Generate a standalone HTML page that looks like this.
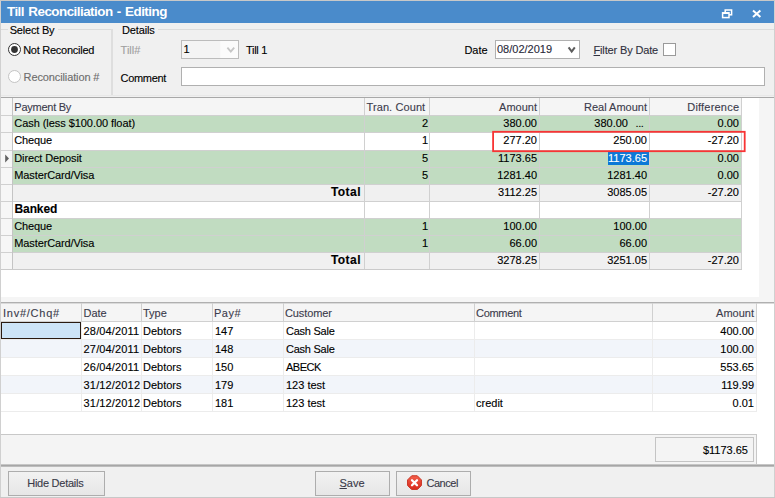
<!DOCTYPE html>
<html><head><meta charset="utf-8"><title>Till Reconciliation - Editing</title>
<style>
html,body{margin:0;padding:0;}
body{width:775px;height:498px;overflow:hidden;position:relative;background:#f0f0f0;font-family:"Liberation Sans", sans-serif;font-size:11px;}
.a{position:absolute;}
.t{white-space:nowrap;-webkit-text-stroke:0.12px currentColor;}
</style></head><body>
<div class="a " style="left:0px;top:0px;width:775px;height:498px;background:#f0f0f0;"></div>
<div class="a " style="left:0px;top:0px;width:775px;height:23px;background:#4a8bcb;"></div>
<div class="a t" style="top:4px;line-height:15px;height:15px;font-size:13.4px;color:#fff;font-weight:bold;letter-spacing:-0.52px;left:7px;-webkit-text-stroke:0;word-spacing:1.1px;">Till Reconciliation - Editing</div>
<svg class="a" style="left:720px;top:7px" width="14" height="13" viewBox="0 0 14 13">
<rect x="5.2" y="3" width="6.4" height="4.8" fill="none" stroke="#fff" stroke-width="1.5"/>
<rect x="2.6" y="5.8" width="6.4" height="4.8" fill="#4a8bcb" stroke="#fff" stroke-width="1.5"/>
<rect x="2.6" y="5.4" width="6.4" height="1.6" fill="#fff"/>
</svg>
<svg class="a" style="left:751px;top:8px" width="12" height="12" viewBox="0 0 12 12">
<path d="M2 2.5 L9.4 9.1 M9.4 2.5 L2 9.1" stroke="#fff" stroke-width="2" fill="none"/>
</svg>
<div class="a " style="left:0px;top:0px;width:1px;height:498px;background:#d0d0d0;"></div>
<div class="a " style="left:774px;top:0px;width:1px;height:498px;background:#d0d0d0;"></div>
<div class="a " style="left:0px;top:0px;width:775px;height:1px;background:#c8c8c8;"></div>
<div class="a " style="left:0px;top:497px;width:775px;height:1px;background:#c8c8c8;"></div>
<div class="a " style="left:1px;top:29px;width:7px;height:1px;background:#dcdcdc;"></div>
<div class="a " style="left:58px;top:29px;width:53px;height:1px;background:#dcdcdc;"></div>
<div class="a " style="left:111px;top:29px;width:2px;height:66px;background:#dedede;"></div>
<div class="a " style="left:1px;top:95px;width:773px;height:1px;background:#e8e8e8;"></div>
<div class="a " style="left:158px;top:29px;width:616px;height:1px;background:#dcdcdc;"></div>
<div class="a t" style="top:24px;line-height:12px;height:12px;font-size:11px;color:#000;letter-spacing:-0.2px;left:9.7px;">Select By</div>
<div class="a t" style="top:24px;line-height:12px;height:12px;font-size:11px;color:#000;letter-spacing:-0.15px;left:122px;">Details</div>
<svg class="a" style="left:7px;top:42px" width="15" height="15" viewBox="0 0 15 15">
<circle cx="7.5" cy="7.5" r="6" fill="#fff" stroke="#333" stroke-width="1"/>
<circle cx="7.5" cy="7.5" r="3.4" fill="#333"/></svg>
<svg class="a" style="left:7px;top:69px" width="15" height="15" viewBox="0 0 15 15">
<circle cx="7.5" cy="7.5" r="6" fill="#fff" stroke="#c4c4c4" stroke-width="1"/></svg>
<div class="a t" style="top:44px;line-height:12px;height:12px;font-size:11px;color:#000;letter-spacing:-0.26px;left:23.2px;">Not Reconciled</div>
<div class="a t" style="top:71px;line-height:12px;height:12px;font-size:11px;color:#6d6d6d;letter-spacing:-0.12px;left:23.6px;">Reconciliation #</div>
<div class="a t" style="top:44px;line-height:12px;height:12px;font-size:11px;color:#a0a0a0;left:120.6px;">Till#</div>
<div class="a t" style="top:72px;line-height:12px;height:12px;font-size:11px;color:#000;letter-spacing:-0.3px;left:120.5px;">Comment</div>
<div class="a " style="left:181px;top:40px;width:58px;height:19px;background:#f0f0f0;border:1px solid #bcbcbc;box-sizing:border-box;background:linear-gradient(90deg,#f4f4f4 0%,#f4f4f4 68%,#fbfbfb 69%,#fbfbfb 100%);"></div>
<div class="a t" style="top:43px;line-height:12px;height:12px;font-size:11px;color:#000;left:183.5px;">1</div>
<svg class="a" style="left:226px;top:46px" width="10" height="8" viewBox="0 0 10 8"><path d="M1.4 1.6 L4.8 5.6 L8.2 1.6" stroke="#c6c6c6" stroke-width="1.8" fill="none"/></svg>
<div class="a t" style="top:44px;line-height:12px;height:12px;font-size:11px;color:#000;letter-spacing:-0.3px;left:246px;">Till 1</div>
<div class="a " style="left:181px;top:67px;width:584px;height:19px;background:#fff;border:1px solid #b0b0b0;box-sizing:border-box;"></div>
<div class="a t" style="top:44px;line-height:12px;height:12px;font-size:11px;color:#000;left:464.4px;">Date</div>
<div class="a " style="left:495px;top:40px;width:85px;height:19px;background:#fff;border:1px solid #b0b0b0;box-sizing:border-box;"></div>
<div class="a t" style="top:43px;line-height:12px;height:12px;font-size:11px;color:#2a2a3a;left:497px;">08/02/2019</div>
<svg class="a" style="left:567px;top:46px" width="10" height="8" viewBox="0 0 10 8"><path d="M1.6 1.3 L4.7 5.6 L7.8 1.3" stroke="#5c5c5c" stroke-width="2" fill="none"/></svg>
<div class="a t" style="top:44px;line-height:12px;height:12px;font-size:11px;color:#30303e;letter-spacing:-0.15px;left:593.5px;"><u>F</u>ilter By Date</div>
<div class="a " style="left:663px;top:43px;width:13px;height:13px;background:#fff;border:1px solid #9a9a9a;box-sizing:border-box;"></div>
<div class="a " style="left:1px;top:97px;width:773px;height:1px;background:#a8a8a8;"></div>
<div class="a " style="left:1px;top:98px;width:773px;height:199px;background:#fff;"></div>
<div class="a " style="left:759px;top:98px;width:15px;height:199px;background:#f5f5f5;"></div>
<div class="a " style="left:1px;top:98px;width:11px;height:171px;background:#f6f6f6;"></div>
<div class="a " style="left:12px;top:98px;width:729px;height:17px;background:#f5f5f5;"></div>
<div class="a t" style="top:101px;line-height:12px;height:12px;font-size:11px;color:#3c3c4c;letter-spacing:-0.25px;left:14.3px;">Payment By</div>
<div class="a t" style="top:101px;line-height:12px;height:12px;font-size:11px;color:#3c3c4c;letter-spacing:0.1px;left:366.5px;">Tran. Count</div>
<div class="a t" style="top:101px;line-height:12px;height:12px;font-size:11px;color:#3c3c4c;right:238px;text-align:right;">Amount</div>
<div class="a t" style="top:101px;line-height:12px;height:12px;font-size:11px;color:#3c3c4c;right:128px;text-align:right;">Real Amount</div>
<div class="a t" style="top:101px;line-height:12px;height:12px;font-size:11px;color:#3c3c4c;letter-spacing:0.2px;right:35.8px;text-align:right;">Difference</div>
<div class="a " style="left:12px;top:115px;width:729px;height:17px;background:#c1dcc1;"></div>
<div class="a t" style="top:117px;line-height:12px;height:12px;font-size:11px;color:#000;letter-spacing:-0.06px;left:14.3px;">Cash (less $100.00 float)</div>
<div class="a t" style="top:117px;line-height:12px;height:12px;font-size:11px;color:#000;right:347px;text-align:right;">2</div>
<div class="a t" style="top:117px;line-height:12px;height:12px;font-size:11px;color:#000;right:238px;text-align:right;">380.00</div>
<div class="a t" style="top:117px;line-height:12px;height:12px;font-size:11px;color:#000;right:147px;text-align:right;">380.00</div>
<div class="a t" style="top:117px;line-height:12px;height:12px;font-size:11px;color:#000;letter-spacing:-0.4px;left:635.5px;">...</div>
<div class="a t" style="top:117px;line-height:12px;height:12px;font-size:11px;color:#000;right:36px;text-align:right;">0.00</div>
<div class="a " style="left:12px;top:132px;width:729px;height:18px;background:#fff;"></div>
<div class="a t" style="top:134px;line-height:12px;height:12px;font-size:11px;color:#000;letter-spacing:-0.12px;left:14.3px;">Cheque</div>
<div class="a t" style="top:134px;line-height:12px;height:12px;font-size:11px;color:#000;right:347px;text-align:right;">1</div>
<div class="a t" style="top:134px;line-height:12px;height:12px;font-size:11px;color:#000;right:238px;text-align:right;">277.20</div>
<div class="a t" style="top:134px;line-height:12px;height:12px;font-size:11px;color:#000;right:128px;text-align:right;">250.00</div>
<div class="a t" style="top:134px;line-height:12px;height:12px;font-size:11px;color:#000;right:36px;text-align:right;">-27.20</div>
<div class="a " style="left:12px;top:150px;width:729px;height:17px;background:#c1dcc1;"></div>
<div class="a t" style="top:152px;line-height:12px;height:12px;font-size:11px;color:#000;letter-spacing:-0.12px;left:14.3px;">Direct Deposit</div>
<div class="a t" style="top:152px;line-height:12px;height:12px;font-size:11px;color:#000;right:347px;text-align:right;">5</div>
<div class="a t" style="top:152px;line-height:12px;height:12px;font-size:11px;color:#000;right:238px;text-align:right;">1173.65</div>
<div class="a " style="left:608px;top:152px;width:41px;height:12.5px;background:#0c78d7;"></div>
<div class="a t" style="top:152px;line-height:12px;height:12px;font-size:11px;color:#fff;right:128px;text-align:right;">1173.65</div>
<div class="a t" style="top:152px;line-height:12px;height:12px;font-size:11px;color:#000;right:36px;text-align:right;">0.00</div>
<div class="a " style="left:12px;top:167px;width:729px;height:17px;background:#c1dcc1;"></div>
<div class="a t" style="top:169px;line-height:12px;height:12px;font-size:11px;color:#000;letter-spacing:-0.12px;left:14.3px;">MasterCard/Visa</div>
<div class="a t" style="top:169px;line-height:12px;height:12px;font-size:11px;color:#000;right:347px;text-align:right;">5</div>
<div class="a t" style="top:169px;line-height:12px;height:12px;font-size:11px;color:#000;right:238px;text-align:right;">1281.40</div>
<div class="a t" style="top:169px;line-height:12px;height:12px;font-size:11px;color:#000;right:128px;text-align:right;">1281.40</div>
<div class="a t" style="top:169px;line-height:12px;height:12px;font-size:11px;color:#000;right:36px;text-align:right;">0.00</div>
<div class="a " style="left:12px;top:184px;width:729px;height:17px;background:#f0f0f0;"></div>
<div class="a t" style="top:185px;line-height:14px;height:14px;font-size:12px;color:#000;font-weight:bold;letter-spacing:0.45px;right:414.05px;text-align:right;">Total</div>
<div class="a t" style="top:186px;line-height:12px;height:12px;font-size:11px;color:#000;right:238px;text-align:right;">3112.25</div>
<div class="a t" style="top:186px;line-height:12px;height:12px;font-size:11px;color:#000;right:128px;text-align:right;">3085.05</div>
<div class="a t" style="top:186px;line-height:12px;height:12px;font-size:11px;color:#000;right:36px;text-align:right;">-27.20</div>
<div class="a " style="left:12px;top:201px;width:729px;height:17px;background:#fff;"></div>
<div class="a t" style="top:202px;line-height:14px;height:14px;font-size:12px;color:#000;font-weight:bold;letter-spacing:-0.1px;left:14.5px;">Banked</div>
<div class="a " style="left:12px;top:218px;width:729px;height:17px;background:#c1dcc1;"></div>
<div class="a t" style="top:220px;line-height:12px;height:12px;font-size:11px;color:#000;letter-spacing:-0.12px;left:14.3px;">Cheque</div>
<div class="a t" style="top:220px;line-height:12px;height:12px;font-size:11px;color:#000;right:347px;text-align:right;">1</div>
<div class="a t" style="top:220px;line-height:12px;height:12px;font-size:11px;color:#000;right:238px;text-align:right;">100.00</div>
<div class="a t" style="top:220px;line-height:12px;height:12px;font-size:11px;color:#000;right:128px;text-align:right;">100.00</div>
<div class="a " style="left:12px;top:235px;width:729px;height:17px;background:#c1dcc1;"></div>
<div class="a t" style="top:237px;line-height:12px;height:12px;font-size:11px;color:#000;letter-spacing:-0.12px;left:14.3px;">MasterCard/Visa</div>
<div class="a t" style="top:237px;line-height:12px;height:12px;font-size:11px;color:#000;right:347px;text-align:right;">1</div>
<div class="a t" style="top:237px;line-height:12px;height:12px;font-size:11px;color:#000;right:238px;text-align:right;">66.00</div>
<div class="a t" style="top:237px;line-height:12px;height:12px;font-size:11px;color:#000;right:128px;text-align:right;">66.00</div>
<div class="a " style="left:12px;top:252px;width:729px;height:17px;background:#f0f0f0;"></div>
<div class="a t" style="top:253px;line-height:14px;height:14px;font-size:12px;color:#000;font-weight:bold;letter-spacing:0.45px;right:414.05px;text-align:right;">Total</div>
<div class="a t" style="top:254px;line-height:12px;height:12px;font-size:11px;color:#000;right:238px;text-align:right;">3278.25</div>
<div class="a t" style="top:254px;line-height:12px;height:12px;font-size:11px;color:#000;right:128px;text-align:right;">3251.05</div>
<div class="a t" style="top:254px;line-height:12px;height:12px;font-size:11px;color:#000;right:36px;text-align:right;">-27.20</div>
<div class="a " style="left:1px;top:115px;width:741px;height:1px;background:#d0d0d0;"></div>
<div class="a " style="left:1px;top:132px;width:741px;height:1px;background:#d0d0d0;"></div>
<div class="a " style="left:1px;top:150px;width:741px;height:1px;background:#d0d0d0;"></div>
<div class="a " style="left:1px;top:167px;width:741px;height:1px;background:#d0d0d0;"></div>
<div class="a " style="left:1px;top:184px;width:741px;height:1px;background:#d0d0d0;"></div>
<div class="a " style="left:1px;top:201px;width:741px;height:1px;background:#d0d0d0;"></div>
<div class="a " style="left:1px;top:218px;width:741px;height:1px;background:#d0d0d0;"></div>
<div class="a " style="left:1px;top:235px;width:741px;height:1px;background:#d0d0d0;"></div>
<div class="a " style="left:1px;top:252px;width:741px;height:1px;background:#d0d0d0;"></div>
<div class="a " style="left:1px;top:269px;width:741px;height:1px;background:#d0d0d0;"></div>
<div class="a " style="left:12px;top:98px;width:1px;height:172px;background:#d0d0d0;"></div>
<div class="a " style="left:364px;top:98px;width:1px;height:172px;background:#d0d0d0;"></div>
<div class="a " style="left:429px;top:98px;width:1px;height:172px;background:#d0d0d0;"></div>
<div class="a " style="left:539px;top:98px;width:1px;height:172px;background:#d0d0d0;"></div>
<div class="a " style="left:649px;top:98px;width:1px;height:172px;background:#d0d0d0;"></div>
<div class="a " style="left:741px;top:98px;width:1px;height:172px;background:#d0d0d0;"></div>
<div class="a " style="left:12px;top:98px;width:1px;height:172px;background:#c4c4c4;"></div>
<div class="a " style="left:1px;top:269px;width:741px;height:1px;background:#cacaca;"></div>
<svg class="a" style="left:4px;top:154px" width="6" height="9" viewBox="0 0 6 9"><path d="M1.2 0.5 L5 4.5 L1.2 8.5 Z" fill="#606060"/></svg>
<svg class="a" style="left:490px;top:129px" width="258" height="25" viewBox="0 0 258 25"><rect x="3.1" y="2.8" width="251.6" height="19.4" fill="none" stroke="#f83434" stroke-width="1.8"/></svg>
<div class="a " style="left:1px;top:297px;width:773px;height:6px;background:#f5f5f5;"></div>
<div class="a " style="left:1px;top:302px;width:773px;height:1px;background:#b0b0b0;"></div>
<div class="a " style="left:1px;top:303px;width:773px;height:162px;background:#fff;"></div>
<div class="a " style="left:1px;top:303px;width:756px;height:18px;background:#f5f5f5;"></div>
<div class="a " style="left:1px;top:303px;width:773px;height:1px;background:#dadada;"></div>
<div class="a t" style="top:307px;line-height:12px;height:12px;font-size:11px;color:#3c3c4c;letter-spacing:0.75px;left:3px;">Inv#/Chq#</div>
<div class="a t" style="top:307px;line-height:12px;height:12px;font-size:11px;color:#3c3c4c;left:83.5px;">Date</div>
<div class="a t" style="top:307px;line-height:12px;height:12px;font-size:11px;color:#3c3c4c;left:143px;">Type</div>
<div class="a t" style="top:307px;line-height:12px;height:12px;font-size:11px;color:#3c3c4c;letter-spacing:0.5px;left:214px;">Pay#</div>
<div class="a t" style="top:307px;line-height:12px;height:12px;font-size:11px;color:#3c3c4c;letter-spacing:-0.1px;left:285px;">Customer</div>
<div class="a t" style="top:307px;line-height:12px;height:12px;font-size:11px;color:#3c3c4c;letter-spacing:-0.3px;left:476px;">Comment</div>
<div class="a t" style="top:307px;line-height:12px;height:12px;font-size:11px;color:#3c3c4c;right:21px;text-align:right;">Amount</div>
<div class="a t" style="top:325px;line-height:12px;height:12px;font-size:11px;color:#000;letter-spacing:0.15px;left:83.6px;">28/04/2011</div>
<div class="a t" style="top:325px;line-height:12px;height:12px;font-size:11px;color:#000;left:143px;">Debtors</div>
<div class="a t" style="top:325px;line-height:12px;height:12px;font-size:11px;color:#000;left:215px;">147</div>
<div class="a t" style="top:325px;line-height:12px;height:12px;font-size:11px;color:#000;letter-spacing:-0.25px;left:286px;">Cash Sale</div>
<div class="a t" style="top:325px;line-height:12px;height:12px;font-size:11px;color:#000;right:21px;text-align:right;">400.00</div>
<div class="a " style="left:1px;top:339.4px;width:756px;height:17.9px;background:#f2f5fa;"></div>
<div class="a t" style="top:343px;line-height:12px;height:12px;font-size:11px;color:#000;letter-spacing:0.15px;left:83.6px;">27/04/2011</div>
<div class="a t" style="top:343px;line-height:12px;height:12px;font-size:11px;color:#000;left:143px;">Debtors</div>
<div class="a t" style="top:343px;line-height:12px;height:12px;font-size:11px;color:#000;left:215px;">148</div>
<div class="a t" style="top:343px;line-height:12px;height:12px;font-size:11px;color:#000;letter-spacing:-0.25px;left:286px;">Cash Sale</div>
<div class="a t" style="top:343px;line-height:12px;height:12px;font-size:11px;color:#000;right:21px;text-align:right;">100.00</div>
<div class="a t" style="top:361px;line-height:12px;height:12px;font-size:11px;color:#000;letter-spacing:0.15px;left:83.6px;">26/04/2011</div>
<div class="a t" style="top:361px;line-height:12px;height:12px;font-size:11px;color:#000;left:143px;">Debtors</div>
<div class="a t" style="top:361px;line-height:12px;height:12px;font-size:11px;color:#000;left:215px;">150</div>
<div class="a t" style="top:361px;line-height:12px;height:12px;font-size:11px;color:#000;letter-spacing:-0.5px;left:286px;">ABECK</div>
<div class="a t" style="top:361px;line-height:12px;height:12px;font-size:11px;color:#000;right:21px;text-align:right;">553.65</div>
<div class="a " style="left:1px;top:375.2px;width:756px;height:17.9px;background:#f2f5fa;"></div>
<div class="a t" style="top:379px;line-height:12px;height:12px;font-size:11px;color:#000;letter-spacing:0.15px;left:83.6px;">31/12/2012</div>
<div class="a t" style="top:379px;line-height:12px;height:12px;font-size:11px;color:#000;left:143px;">Debtors</div>
<div class="a t" style="top:379px;line-height:12px;height:12px;font-size:11px;color:#000;left:215px;">179</div>
<div class="a t" style="top:379px;line-height:12px;height:12px;font-size:11px;color:#000;left:286px;">123 test</div>
<div class="a t" style="top:379px;line-height:12px;height:12px;font-size:11px;color:#000;right:21px;text-align:right;">119.99</div>
<div class="a t" style="top:397px;line-height:12px;height:12px;font-size:11px;color:#000;letter-spacing:0.15px;left:83.6px;">31/12/2012</div>
<div class="a t" style="top:397px;line-height:12px;height:12px;font-size:11px;color:#000;left:143px;">Debtors</div>
<div class="a t" style="top:397px;line-height:12px;height:12px;font-size:11px;color:#000;left:215px;">181</div>
<div class="a t" style="top:397px;line-height:12px;height:12px;font-size:11px;color:#000;left:286px;">123 test</div>
<div class="a t" style="top:397px;line-height:12px;height:12px;font-size:11px;color:#000;left:476px;">credit</div>
<div class="a t" style="top:397px;line-height:12px;height:12px;font-size:11px;color:#000;right:21px;text-align:right;">0.01</div>
<div class="a " style="left:1px;top:339.4px;width:756px;height:1px;background:#ececec;"></div>
<div class="a " style="left:1px;top:357.3px;width:756px;height:1px;background:#ececec;"></div>
<div class="a " style="left:1px;top:375.2px;width:756px;height:1px;background:#ececec;"></div>
<div class="a " style="left:1px;top:393.1px;width:756px;height:1px;background:#ececec;"></div>
<div class="a " style="left:1px;top:411.0px;width:756px;height:1px;background:#ececec;"></div>
<div class="a " style="left:81px;top:303px;width:1px;height:18px;background:#d0d0d0;"></div>
<div class="a " style="left:81px;top:321px;width:1px;height:90px;background:#ececec;"></div>
<div class="a " style="left:141px;top:303px;width:1px;height:18px;background:#d0d0d0;"></div>
<div class="a " style="left:141px;top:321px;width:1px;height:90px;background:#ececec;"></div>
<div class="a " style="left:212px;top:303px;width:1px;height:18px;background:#d0d0d0;"></div>
<div class="a " style="left:212px;top:321px;width:1px;height:90px;background:#ececec;"></div>
<div class="a " style="left:283px;top:303px;width:1px;height:18px;background:#d0d0d0;"></div>
<div class="a " style="left:283px;top:321px;width:1px;height:90px;background:#ececec;"></div>
<div class="a " style="left:474px;top:303px;width:1px;height:18px;background:#d0d0d0;"></div>
<div class="a " style="left:474px;top:321px;width:1px;height:90px;background:#ececec;"></div>
<div class="a " style="left:652px;top:303px;width:1px;height:18px;background:#d0d0d0;"></div>
<div class="a " style="left:652px;top:321px;width:1px;height:90px;background:#ececec;"></div>
<div class="a " style="left:756px;top:303px;width:1px;height:18px;background:#d0d0d0;"></div>
<div class="a " style="left:756px;top:321px;width:1px;height:90px;background:#ececec;"></div>
<div class="a " style="left:1px;top:321px;width:756px;height:1px;background:#d0d0d0;"></div>
<div class="a " style="left:1px;top:322px;width:80px;height:17px;background:#cde4f7;border:1px solid #2a1a10;box-sizing:border-box;"></div>
<div class="a " style="left:1px;top:434px;width:756px;height:31px;background:#f4f4f4;border-top:1px solid #c8c8c8;border-right:1px solid #c8c8c8;box-sizing:border-box;"></div>
<div class="a " style="left:655px;top:437px;width:99px;height:25px;background:#f4f4f4;border:1px solid #c4c4c4;box-sizing:border-box;"></div>
<div class="a t" style="top:444px;line-height:12px;height:12px;font-size:11px;color:#000;right:27px;text-align:right;">$1173.65</div>
<div class="a " style="left:1px;top:464px;width:773px;height:1px;background:#c6c6c6;"></div>
<div class="a " style="left:1px;top:465px;width:773px;height:1px;background:#a6a6a6;"></div>
<div class="a " style="left:1px;top:466px;width:773px;height:1px;background:#bcbcbc;"></div>
<div class="a " style="left:1px;top:467px;width:773px;height:30px;background:#f0f0f0;"></div>
<div class="a " style="left:8px;top:471px;width:97px;height:24.5px;background:#e9e9e9;border:1px solid #adadad;box-sizing:border-box;background:linear-gradient(#f2f2f2,#e6e6e6);"></div>
<div class="a t" style="top:476.5px;line-height:12px;height:12px;font-size:11px;color:#3a3a48;letter-spacing:-0.25px;left:27.2px;">Hide Details</div>
<div class="a " style="left:315px;top:471px;width:75px;height:24.5px;background:#e9e9e9;border:1px solid #adadad;box-sizing:border-box;background:linear-gradient(#f2f2f2,#e6e6e6);"></div>
<div class="a t" style="top:476.5px;line-height:12px;height:12px;font-size:11px;color:#3a3a48;left:339.5px;"><u>S</u>ave</div>
<div class="a " style="left:396px;top:471px;width:75px;height:24.5px;background:#e9e9e9;border:1px solid #adadad;box-sizing:border-box;background:linear-gradient(#f2f2f2,#e6e6e6);"></div>
<div class="a t" style="top:476.5px;line-height:12px;height:12px;font-size:11px;color:#3a3a48;letter-spacing:-0.45px;left:426.4px;">Cancel</div>
<svg class="a" style="left:407px;top:474.7px" width="15" height="15.4" viewBox="0 0 15 15">
<defs><linearGradient id="cg" x1="0" y1="0" x2="0" y2="1"><stop offset="0" stop-color="#f4604c"/><stop offset="1" stop-color="#d8281a"/></linearGradient></defs>
<path d="M4.7 0.6 H10.3 L14.4 4.7 V10.3 L10.3 14.4 H4.7 L0.6 10.3 V4.7 Z" fill="url(#cg)" stroke="#c8301f" stroke-width="1"/>
<path d="M5 5 L10 10 M10 5 L5 10" stroke="#fff" stroke-width="2.3" stroke-linecap="round" fill="none"/></svg>
</body></html>
